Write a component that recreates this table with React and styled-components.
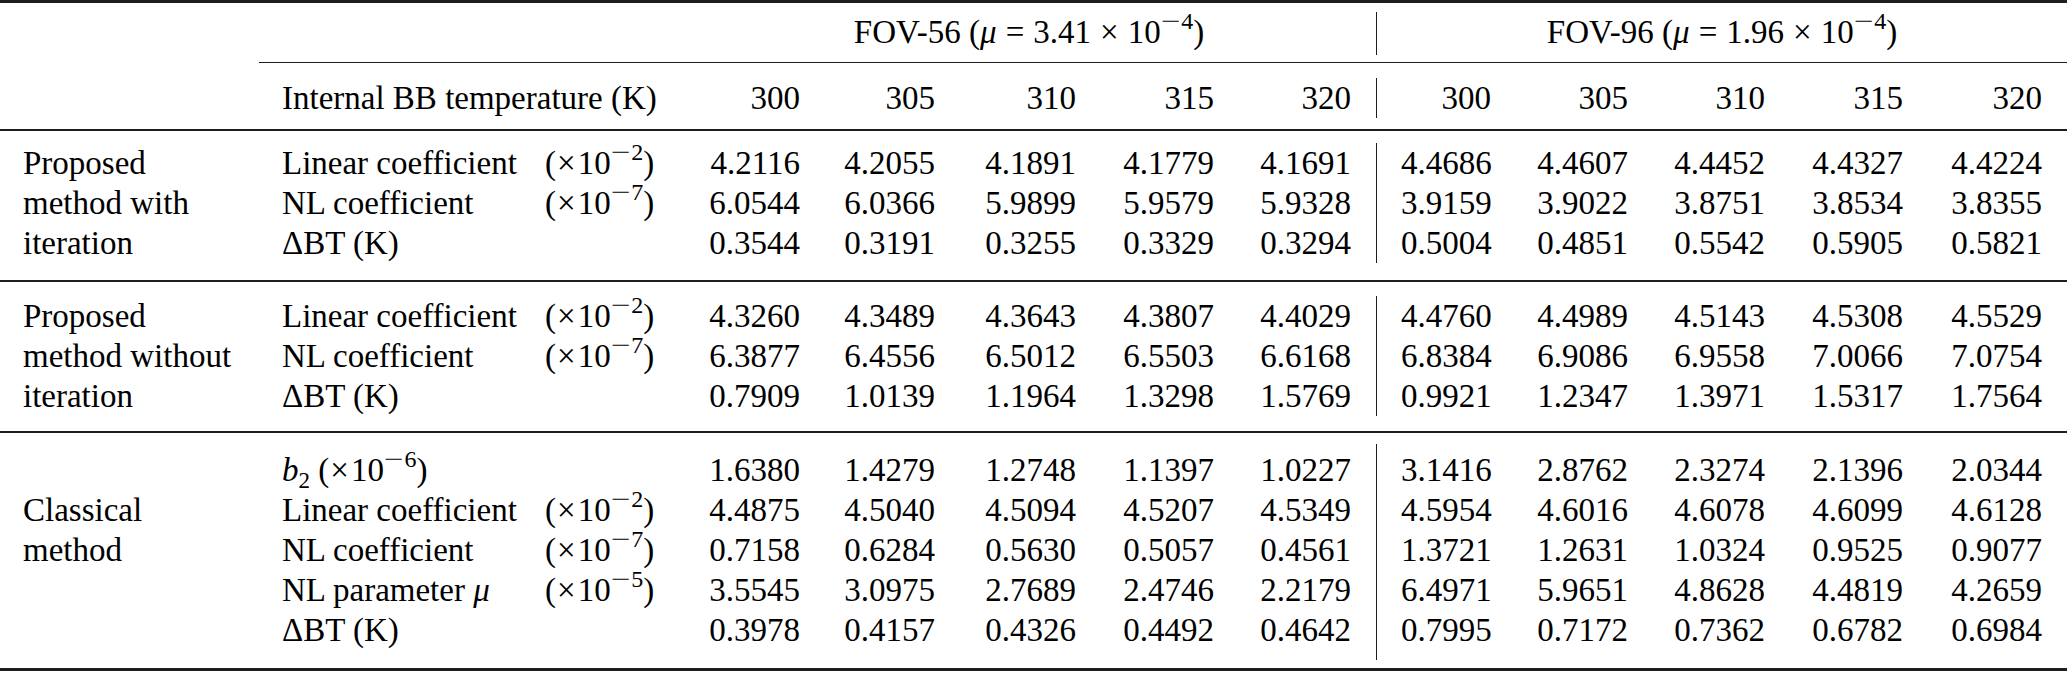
import React from "react";
import styled, { createGlobalStyle } from "styled-components";

const GlobalStyle = createGlobalStyle`
  html, body {
    margin: 0;
    padding: 0;
    background: #ffffff;
  }
  body {
    font-family: "Liberation Serif", "Times New Roman", Times, serif;
    color: #000000;
  }
`;

// label | unit | five FOV-56 columns | divider | five FOV-96 columns | tail
const COLUMNS =
  "259px 286px 137px 118px 135px 141px 138px 137px 50px 90px 137px 137px 138px 139px 25px";

const temps = ["300", "305", "310", "315", "320"];

const sections = [
  {
    method: ["Proposed", "method with", "iteration"],
    methodRows: "1 / 4",
    rows: "repeat(3, 40px)",
    pad: "12px 0 17px",
    data: [
      { label: "Linear coefficient", exp: "2", left: ["4.2116", "4.2055", "4.1891", "4.1779", "4.1691"], right: ["4.4686", "4.4607", "4.4452", "4.4327", "4.4224"] },
      { label: "NL coefficient", exp: "7", left: ["6.0544", "6.0366", "5.9899", "5.9579", "5.9328"], right: ["3.9159", "3.9022", "3.8751", "3.8534", "3.8355"] },
      { label: "dbt", left: ["0.3544", "0.3191", "0.3255", "0.3329", "0.3294"], right: ["0.5004", "0.4851", "0.5542", "0.5905", "0.5821"] },
    ],
  },
  {
    method: ["Proposed", "method without", "iteration"],
    methodRows: "1 / 4",
    rows: "repeat(3, 40px)",
    pad: "14px 0 15px",
    data: [
      { label: "Linear coefficient", exp: "2", left: ["4.3260", "4.3489", "4.3643", "4.3807", "4.4029"], right: ["4.4760", "4.4989", "4.5143", "4.5308", "4.5529"] },
      { label: "NL coefficient", exp: "7", left: ["6.3877", "6.4556", "6.5012", "6.5503", "6.6168"], right: ["6.8384", "6.9086", "6.9558", "7.0066", "7.0754"] },
      { label: "dbt", left: ["0.7909", "1.0139", "1.1964", "1.3298", "1.5769"], right: ["0.9921", "1.2347", "1.3971", "1.5317", "1.7564"] },
    ],
  },
  {
    method: ["Classical", "method"],
    methodRows: "2 / 4",
    rows: "46px repeat(4, 40px)",
    pad: "11px 0 18px",
    bleed: "0 0 -10px",
    data: [
      { label: "b2", left: ["1.6380", "1.4279", "1.2748", "1.1397", "1.0227"], right: ["3.1416", "2.8762", "2.3274", "2.1396", "2.0344"] },
      { label: "Linear coefficient", exp: "2", left: ["4.4875", "4.5040", "4.5094", "4.5207", "4.5349"], right: ["4.5954", "4.6016", "4.6078", "4.6099", "4.6128"] },
      { label: "NL coefficient", exp: "7", left: ["0.7158", "0.6284", "0.5630", "0.5057", "0.4561"], right: ["1.3721", "1.2631", "1.0324", "0.9525", "0.9077"] },
      { label: "mu", exp: "5", left: ["3.5545", "3.0975", "2.7689", "2.4746", "2.2179"], right: ["6.4971", "5.9651", "4.8628", "4.4819", "4.2659"] },
      { label: "dbt", left: ["0.3978", "0.4157", "0.4326", "0.4492", "0.4642"], right: ["0.7995", "0.7172", "0.7362", "0.6782", "0.6984"] },
    ],
  },
];

export default function App() {
  return (
    <>
      <GlobalStyle />
      <Table>
        <Rule $weight={3} />
        <Band $rows="43px" $pad="9px 0 7px">
          <Group $side="left">
            FOV-56 (<Ital>μ</Ital>
            <Op>=</Op>3.41<Op>×</Op>10<Power n="4" />)
          </Group>
          <Divider />
          <Group $side="right">
            FOV-96 (<Ital>μ</Ital>
            <Op>=</Op>1.96<Op>×</Op>10<Power n="4" />)
          </Group>
        </Band>
        <Rule $weight={1} $indent={259} />
        <Band $rows="40px" $pad="15px 0 11px">
          <Label $wide>Internal BB temperature (K)</Label>
          {temps.map((t) => (
            <Num key={"a" + t}>{t}</Num>
          ))}
          <Divider />
          {temps.map((t) => (
            <Num key={"b" + t}>{t}</Num>
          ))}
        </Band>
        {sections.map((s, i) => (
          <React.Fragment key={i}>
            <Rule $weight={2} />
            <Band $rows={s.rows} $pad={s.pad}>
              <Method $rows={s.methodRows}>
                {s.method.map((m) => (
                  <div key={m}>{m}</div>
                ))}
              </Method>
              <Divider $bleed={s.bleed} />
              {s.data.map((r, j) => (
                <React.Fragment key={j}>
                  <QuantityLabel row={r} />
                  {r.left.map((v, k) => (
                    <Num key={"l" + k}>{v}</Num>
                  ))}
                  {r.right.map((v, k) => (
                    <Num key={"r" + k} $after={k === 0}>
                      {v}
                    </Num>
                  ))}
                </React.Fragment>
              ))}
            </Band>
          </React.Fragment>
        ))}
        <Rule $weight={3} />
      </Table>
    </>
  );
}

// negative power of ten, the minus drawn as wide as in TeX math
function Power({ n }) {
  return (
    <Sup>
      <Minus>−</Minus>
      {n}
    </Sup>
  );
}

function Scale({ exp }) {
  return (
    <>
      (<Times>×</Times>10<Power n={exp} />)
    </>
  );
}

function QuantityLabel({ row }) {
  if (row.label === "dbt") {
    return <Label $wide>ΔBT (K)</Label>;
  }
  if (row.label === "b2") {
    return (
      <Label $wide>
        <Ital>b</Ital>
        <Sub>2</Sub> <Scale exp="6" />
      </Label>
    );
  }
  return (
    <>
      <Label>
        {row.label === "mu" ? (
          <>
            NL parameter <Ital>μ</Ital>
          </>
        ) : (
          row.label
        )}
      </Label>
      <Unit>
        <Scale exp={row.exp} />
      </Unit>
    </>
  );
}

const Table = styled.div`
  width: 2067px;
  font-family: "Liberation Serif", "Times New Roman", Times, serif;
  font-size: 33px;
  line-height: 40px;
  color: #000000;
`;

const Rule = styled.div`
  height: ${(p) => p.$weight}px;
  margin-left: ${(p) => p.$indent || 0}px;
  background: #1e1e1e;
`;

const Band = styled.div`
  display: grid;
  grid-template-columns: ${COLUMNS};
  grid-template-rows: ${(p) => p.$rows};
  padding: ${(p) => p.$pad};
`;

const Group = styled.div`
  grid-row: 1;
  grid-column: ${(p) => (p.$side === "left" ? "4 / 9" : "10 / 16")};
  padding-left: ${(p) => (p.$side === "left" ? "25px" : "0")};
  padding-right: ${(p) => (p.$side === "left" ? "0" : "24px")};
  align-self: start;
  text-align: center;
  white-space: nowrap;
`;

const Method = styled.div`
  grid-column: 1;
  grid-row: ${(p) => p.$rows};
  align-self: end;
  padding-left: 23px;
  white-space: nowrap;
`;

const Label = styled.div`
  grid-column: ${(p) => (p.$wide ? "2 / 4" : "2")};
  align-self: end;
  padding-left: 23px;
  white-space: nowrap;
`;

const Unit = styled.div`
  grid-column: 3;
  align-self: end;
  white-space: nowrap;
`;

const Num = styled.div`
  grid-column: ${(p) => (p.$after ? "10" : "auto")};
  align-self: end;
  text-align: right;
  white-space: nowrap;
`;

const Divider = styled.div`
  grid-column: 9;
  grid-row: 1 / -1;
  justify-self: center;
  width: 1px;
  margin: ${(p) => p.$bleed || "0"};
  background: #1e1e1e;
`;

const Ital = styled.i`
  font-style: italic;
`;

const Op = styled.span`
  margin: 0 9px;
`;

const Times = styled.span`
  margin: 0 2px 0 1px;
`;

const Sup = styled.sup`
  font-size: 24px;
  line-height: 0;
  vertical-align: 14px;
`;

const Minus = styled.span`
  display: inline-block;
  margin: 0 4px 0 3px;
  transform: scaleX(1.45);
`;

const Sub = styled.sub`
  font-size: 23px;
  line-height: 0;
  vertical-align: -7px;
`;
